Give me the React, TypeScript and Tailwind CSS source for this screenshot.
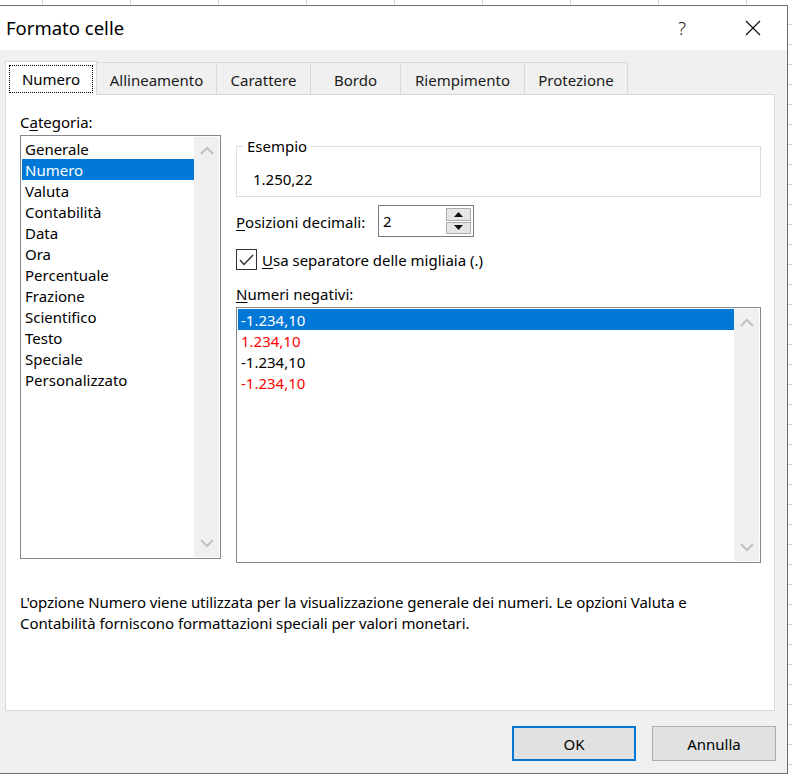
import React from 'react';

const categories = [
  'Generale',
  'Numero',
  'Valuta',
  'Contabilità',
  'Data',
  'Ora',
  'Percentuale',
  'Frazione',
  'Scientifico',
  'Testo',
  'Speciale',
  'Personalizzato',
];

const negatives = [
  { text: '-1.234,10', red: false },
  { text: '1.234,10', red: true },
  { text: '-1.234,10', red: false },
  { text: '-1.234,10', red: true },
];

const tabs = ['Allineamento', 'Carattere', 'Bordo', 'Riempimento', 'Protezione'];
const tabWidths = ['w-[120px]', 'w-[94px]', 'w-[90px]', 'w-[124px]', 'w-[103px]'];

const ChevronUp = () => (
  <svg width="14" height="9" viewBox="0 0 14 9" className="text-[#c1c1c1]">
    <path d="M1 8 L7 2 L13 8" fill="none" stroke="currentColor" strokeWidth="2" />
  </svg>
);

const ChevronDown = () => (
  <svg width="14" height="9" viewBox="0 0 14 9" className="text-[#c1c1c1]">
    <path d="M1 1 L7 7 L13 1" fill="none" stroke="currentColor" strokeWidth="2" />
  </svg>
);

const Scrollbar = () => (
  <div className="w-[25px] bg-[#f0f0f0] flex flex-col items-center justify-between py-[9px]">
    <ChevronUp />
    <ChevronDown />
  </div>
);

export default function App() {
  return (
    <div
      className="w-[792px] h-[776px] bg-white overflow-hidden flex flex-col text-[15px] text-black"
      style={{ fontFamily: '"Noto Sans", "Segoe UI", sans-serif' }}
    >
      {/* excel grid strip above the dialog */}
      <div className="h-[5px] flex shrink-0 overflow-hidden">
        <div className="w-[43px] shrink-0 border-r border-[#d4d4d4]" />
        {Array.from({ length: 9 }).map((_, i) => (
          <div key={i} className="w-[88px] shrink-0 border-r border-[#d4d4d4]" />
        ))}
      </div>

      <div className="flex h-[769px] shrink-0">
        {/* dialog */}
        <div className="w-[788px] shrink-0 flex flex-col border-t border-r border-b border-[#6e6e6e] bg-[#f0f0f0]">
          {/* title bar */}
          <div className="h-[44px] bg-white flex items-center shrink-0">
            <span className="pl-[6px] text-[18.5px] leading-none">Formato celle</span>
            <span className="ml-auto mr-[59px] text-[19px] leading-none font-light text-[#222]">?</span>
            <svg width="16" height="16" viewBox="0 0 16 16" className="mr-[26px]">
              <path d="M1 1 L15 15 M15 1 L1 15" stroke="#111" strokeWidth="1.2" fill="none" />
            </svg>
          </div>

          {/* tabs */}
          <div className="pl-[5px] pt-[11px] flex items-end h-[44px] shrink-0">
            <div className="w-[92px] h-[34px] bg-white border-t border-l border-r border-[#d9d9d9] relative z-10 -mb-px flex items-center justify-center">
              <span className="border border-dotted border-black h-[28px] pt-[2px] flex items-center w-[84px] justify-center">
                Numero
              </span>
            </div>
            {tabs.map((t, i) => (
              <div
                key={t}
                className={`${tabWidths[i]} h-[32px] pt-[3px] border-t border-r border-[#d9d9d9] flex items-center justify-center text-[#1a1a1a]`}
              >
                {t}
              </div>
            ))}
          </div>

          {/* panel */}
          <div className="ml-[5px] w-[770px] h-[617px] bg-white border border-[#d9d9d9] shrink-0 flex flex-col">
            <div className="flex pl-[14px] pt-[16px]">
              {/* left: category */}
              <div className="w-[201px] flex flex-col">
                <div className="h-[24px] leading-[22px]">
                  C<span className="underline underline-offset-2">a</span>tegoria:
                </div>
                <div className="h-[424px] border border-[#828790] flex p-px">
                  <div className="flex-1 flex flex-col pt-px">
                    {categories.map((c) => (
                      <div
                        key={c}
                        className={`h-[21px] leading-[23px] pl-[3px] ${
                          c === 'Numero' ? 'bg-[#0078d7] text-white' : ''
                        }`}
                      >
                        {c}
                      </div>
                    ))}
                  </div>
                  <Scrollbar />
                </div>
              </div>

              {/* right */}
              <div className="ml-[15px] w-[525px] flex flex-col">
                {/* Esempio group */}
                <div className="mt-[35px] h-[51px] border border-[#dcdcdc] relative">
                  <span className="absolute -top-[12px] left-[6px] bg-white px-[4px] leading-[22px]">
                    Esempio
                  </span>
                  <div className="pl-[16px] pt-[21px] leading-[22px]">1.250,22</div>
                </div>

                {/* decimals */}
                <div className="mt-[8px] flex items-center h-[32px]">
                  <span className="w-[142px] pt-[2px]">
                    <span className="underline underline-offset-2">P</span>osizioni decimali:
                  </span>
                  <div className="w-[96px] h-[32px] border border-[#7a7a7a] flex items-center">
                    <span className="pl-[4px] flex-1 leading-none">2</span>
                    <div className="w-[25px] h-[26px] mr-[2px] flex flex-col gap-px">
                      <div className="flex-1 bg-[#e6e6e6] border border-[#adadad] flex items-center justify-center">
                        <svg width="9" height="5" viewBox="0 0 9 5">
                          <path d="M0 5 L4.5 0 L9 5 Z" fill="#111" />
                        </svg>
                      </div>
                      <div className="flex-1 bg-[#e6e6e6] border border-[#adadad] flex items-center justify-center">
                        <svg width="9" height="5" viewBox="0 0 9 5">
                          <path d="M0 0 L4.5 5 L9 0 Z" fill="#111" />
                        </svg>
                      </div>
                    </div>
                  </div>
                </div>

                {/* checkbox */}
                <div className="mt-[12px] flex items-center h-[21px]">
                  <div className="w-[21px] h-[21px] border border-[#333] flex items-center justify-center">
                    <svg width="15" height="12" viewBox="0 0 15 12">
                      <path d="M1 6 L5 10.5 L14 1" fill="none" stroke="#333" strokeWidth="1.4" />
                    </svg>
                  </div>
                  <span className="ml-[5px] pt-[2px]">
                    <span className="underline underline-offset-2">U</span>sa separatore delle migliaia (.)
                  </span>
                </div>

                {/* negatives */}
                <div className="mt-[13px] h-[24px] leading-[22px]">
                  <span className="underline underline-offset-2">N</span>umeri negativi:
                </div>
                <div className="h-[256px] border border-[#828790] flex p-px">
                  <div className="flex-1 flex flex-col">
                    {negatives.map((n, i) => (
                      <div
                        key={i}
                        className={`h-[21px] leading-[23px] pl-[3px] ${
                          i === 0 ? 'bg-[#0078d7] text-white' : n.red ? 'text-[#ff0000]' : ''
                        }`}
                      >
                        {n.text}
                      </div>
                    ))}
                  </div>
                  <Scrollbar />
                </div>
              </div>
            </div>

            {/* description */}
            <div className="pl-[14px] mt-[29px] leading-[21px] tracking-[-0.07px]">
              L'opzione Numero viene utilizzata per la visualizzazione generale dei numeri. Le opzioni Valuta e
              <br />
              Contabilità forniscono formattazioni speciali per valori monetari.
            </div>
          </div>

          {/* buttons */}
          <div className="flex justify-end gap-[16px] pr-[11px] mt-[15px]">
            <button className="w-[124px] h-[35px] pt-[2px] bg-[#e1e1e1] border-2 border-[#0078d7]">OK</button>
            <button className="w-[124px] h-[35px] pt-[2px] bg-[#e1e1e1] border border-[#adadad]">Annulla</button>
          </div>
        </div>

        {/* excel grid strip right of the dialog */}
        <div className="flex-1 flex flex-col">
          {Array.from({ length: 40 }).map((_, i) => (
            <div key={i} className="h-[20px] shrink-0 border-b border-[#d4d4d4]" />
          ))}
        </div>
      </div>
    </div>
  );
}
